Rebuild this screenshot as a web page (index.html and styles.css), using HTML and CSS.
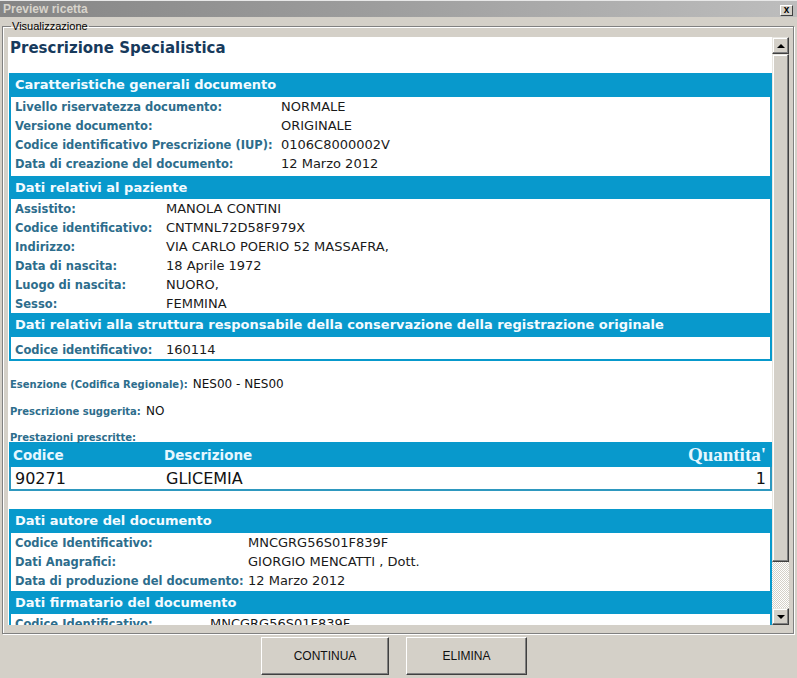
FILE: index.html
```html
<!DOCTYPE html>
<html>
<head>
<meta charset="utf-8">
<title>Preview ricetta</title>
<link rel="stylesheet" href="styles.css">
</head>
<body>
<div class="window">
  <div class="titlebar">
    <span class="title">Preview ricetta</span>
    <span class="close">x</span>
  </div>
  <fieldset class="group">
    <legend>Visualizzazione</legend>
    <div class="view">
      <div class="doc">
        <h1 class="doc-title">Prescrizione Specialistica</h1>

        <div class="sec">
          <div class="sec-h">Caratteristiche generali documento</div>
          <div class="sec-b cols-a pad-b3">
            <span class="lab">Livello riservatezza documento:</span><span class="val">NORMALE</span>
            <span class="lab">Versione documento:</span><span class="val">ORIGINALE</span>
            <span class="lab">Codice identificativo Prescrizione (IUP):</span><span class="val">0106C8000002V</span>
            <span class="lab">Data di creazione del documento:</span><span class="val">12 Marzo 2012</span>
          </div>
        </div>

        <div class="sec">
          <div class="sec-h short">Dati relativi al paziente</div>
          <div class="sec-b cols-b">
            <span class="lab">Assistito:</span><span class="val">MANOLA CONTINI</span>
            <span class="lab">Codice identificativo:</span><span class="val">CNTMNL72D58F979X</span>
            <span class="lab">Indirizzo:</span><span class="val">VIA CARLO POERIO 52 MASSAFRA,</span>
            <span class="lab">Data di nascita:</span><span class="val">18 Aprile 1972</span>
            <span class="lab">Luogo di nascita:</span><span class="val">NUORO,</span>
            <span class="lab">Sesso:</span><span class="val">FEMMINA</span>
          </div>
        </div>

        <div class="sec">
          <div class="sec-h">Dati relativi alla struttura responsabile della conservazione della registrazione originale</div>
          <div class="sec-b cols-b pad-t3 closed">
            <span class="lab">Codice identificativo:</span><span class="val">160114</span>
          </div>
        </div>

        <p class="info info-1"><span class="ilab">Esenzione (Codifica Regionale):</span> <span class="ival">NES00 - NES00</span></p>
        <p class="info info-2"><span class="ilab">Prescrizione suggerita:</span> <span class="ival">NO</span></p>
        <p class="info info-3"><span class="ilab">Prestazioni prescritte:</span></p>

        <div class="ptable">
          <div class="pt-head">
            <span class="pt-code">Codice</span>
            <span class="pt-desc">Descrizione</span>
            <span class="pt-qty">Quantita'</span>
          </div>
          <div class="pt-row">
            <span class="pt-code">90271</span>
            <span class="pt-desc">GLICEMIA</span>
            <span class="pt-qtyv">1</span>
          </div>
        </div>

        <div class="sec">
          <div class="sec-h">Dati autore del documento</div>
          <div class="sec-b cols-c pad-b1">
            <span class="lab">Codice Identificativo:</span><span class="val">MNCGRG56S01F839F</span>
            <span class="lab">Dati Anagrafici:</span><span class="val">GIORGIO MENCATTI , Dott.</span>
            <span class="lab">Data di produzione del documento:</span><span class="val">12 Marzo 2012</span>
          </div>
        </div>

        <div class="sec">
          <div class="sec-h short">Dati firmatario del documento</div>
          <div class="sec-b cols-d">
            <span class="lab">Codice Identificativo:</span><span class="val">MNCGRG56S01F839F</span>
          </div>
        </div>
      </div>
      <div class="scrollbar">
        <div class="sb-btn"><span class="arrow-up"></span></div>
        <div class="sb-thumb"></div>
        <div class="sb-track"></div>
        <div class="sb-btn"><span class="arrow-down"></span></div>
      </div>
    </div>
  </fieldset>
  <div class="buttons">
    <button class="btn btn-continua">CONTINUA</button>
    <button class="btn btn-elimina">ELIMINA</button>
  </div>
</div>
</body>
</html>
```

FILE: styles.css
```css
* { box-sizing: border-box; }

html, body {
  margin: 0;
  padding: 0;
}

body {
  width: 797px;
  height: 678px;
  overflow: hidden;
  background: #d4d0c8;
  font-family: "DejaVu Sans", Verdana, sans-serif;
}

.window {
  display: flex;
  flex-direction: column;
  height: 678px;
}

/* ---------- title bar ---------- */
.titlebar {
  height: 17px;
  flex: 0 0 17px;
  display: flex;
  align-items: center;
  justify-content: space-between;
  padding: 0 4px 0 3px;
  background: linear-gradient(to right, #858585 0%, #9c9c9c 45%, #bdbdbd 100%);
  border-top: 1px solid #e8e8e8;
}

.title {
  font: bold 12px/14px "Liberation Sans", Arial, sans-serif;
  color: #d8d4cc;
}

.close {
  width: 13px;
  height: 11px;
  margin-top: 3px;
  background: #d4d0c8;
  border: 1px solid;
  border-color: #ffffff #404040 #404040 #ffffff;
  font: bold 10px/8px "Liberation Sans", Arial, sans-serif;
  color: #000;
  text-align: center;
}

/* ---------- group box ---------- */
.group {
  margin: 3px 3px 0 2px;
  padding: 4px 4px 8px 5px;
  border: 1px solid #808080;
  box-shadow: inset 1px 1px 0 #ffffff, 1px 1px 0 #ffffff;
  min-width: 0;
}

.group legend {
  margin-left: 3px;
  padding: 0 1px;
  font: 11px/13px "Liberation Sans", Arial, sans-serif;
  color: #000;
}

.view {
  display: flex;
  height: 588px;
}

/* ---------- document ---------- */
.doc {
  flex: 1;
  min-width: 0;
  background: #ffffff;
  overflow: hidden;
  padding-left: 1px;
}

.doc-title {
  margin: 0;
  height: 36px;
  padding: 1px 0 0 1px;
  font-size: 15px;
  line-height: 20px;
  font-weight: bold;
  color: #173a5c;
}

.sec-h {
  height: 24px;
  line-height: 24px;
  padding-left: 6px;
  background: #0899cc;
  color: #f4fbff;
  font-size: 13px;
  font-weight: bold;
  white-space: nowrap;
  overflow: hidden;
}

.sec-h.short {
  height: 23px;
  line-height: 23px;
}

.sec-b {
  display: grid;
  grid-auto-rows: 19px;
  align-items: center;
  padding: 0 4px;
  border: 2px solid #0899cc;
  border-top: 0;
  border-bottom: 0;
}

.sec-b.closed { border-bottom: 2px solid #0899cc; }
.pad-b3 { padding-bottom: 3px; }
.pad-b1 { padding-bottom: 1px; }
.pad-t3 { padding-top: 3px; }

.cols-a { grid-template-columns: 266px 1fr; }
.cols-b { grid-template-columns: 151px 1fr; }
.cols-c { grid-template-columns: 233px 1fr; }
.cols-d { grid-template-columns: 195px 1fr; }

.lab {
  font-size: 11.5px;
  font-weight: bold;
  color: #2d6d8c;
  white-space: nowrap;
}

.val {
  font-size: 13px;
  color: #1a1a1a;
  white-space: nowrap;
}

.info {
  margin: 0;
  padding-left: 1px;
  white-space: nowrap;
}

.info-1 { margin-top: 13px; height: 18px; line-height: 18px; }
.info-2 { margin-top: 9px; height: 18px; line-height: 18px; }
.info-3 { margin-top: 11px; height: 12px; line-height: 12px; }

.ilab {
  font-size: 10px;
  font-weight: bold;
  color: #2d6d8c;
}

.ival {
  font-size: 12px;
  color: #111;
}

/* ---------- prestazioni table ---------- */
.ptable {
  margin-bottom: 18px;
}

.pt-head, .pt-row {
  display: grid;
  grid-template-columns: 151px 1fr auto;
  align-items: center;
  padding: 0 4px;
}

.pt-head {
  height: 25px;
  background: #0899cc;
  color: #e6f7ff;
  font-size: 13.5px;
  font-weight: bold;
}

.pt-qty {
  margin-right: 2px;
  font-family: "Liberation Serif", "Times New Roman", serif;
  font-size: 19px;
  font-weight: bold;
}

.pt-row {
  height: 24px;
  border: 2px solid #2e98bf;
  border-top: 0;
  font-size: 16px;
  color: #111;
}

.pt-qtyv { text-align: right; }

/* ---------- scrollbar ---------- */
.scrollbar {
  width: 17px;
  flex: 0 0 17px;
  display: flex;
  flex-direction: column;
}

.sb-btn, .sb-thumb {
  background: #d4d0c8;
  border: 1px solid;
  border-color: #e8e6e0 #404040 #404040 #e8e6e0;
  box-shadow: inset -1px -1px 0 #808080, inset 1px 1px 0 #ffffff;
}

.sb-btn {
  height: 17px;
  flex: 0 0 17px;
  display: flex;
  align-items: center;
  justify-content: center;
}

.sb-thumb {
  height: 508px;
  flex: 0 0 508px;
}

.sb-track {
  flex: 1;
  background: repeating-conic-gradient(#ffffff 0 25%, #d4d0c8 0 50%) 0 0 / 2px 2px;
}

.arrow-up, .arrow-down {
  width: 0;
  height: 0;
  border-left: 4px solid transparent;
  border-right: 4px solid transparent;
}

.arrow-up { border-bottom: 4px solid #000; }
.arrow-down { border-top: 4px solid #000; }

/* ---------- buttons ---------- */
.buttons {
  display: flex;
  gap: 17px;
  padding-left: 261px;
  margin-top: 3px;
}

.btn {
  height: 38px;
  background: #d4d0c8;
  border: 1px solid;
  border-color: #ffffff #404040 #404040 #ffffff;
  box-shadow: inset -1px -1px 0 #808080;
  font: 12px "Liberation Sans", Arial, sans-serif;
  color: #111;
  padding: 0;
}

.btn-continua { width: 128px; }
.btn-elimina { width: 121px; }
```
